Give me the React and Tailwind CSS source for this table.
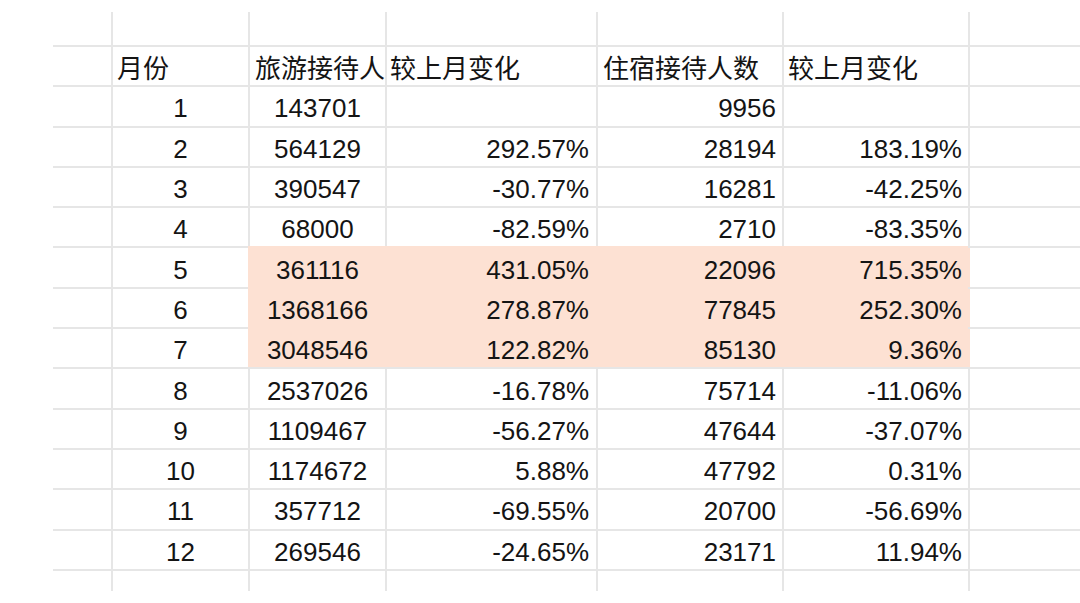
import React from "react";

const rows = [
  ["1", "143701", "", "9956", ""],
  ["2", "564129", "292.57%", "28194", "183.19%"],
  ["3", "390547", "-30.77%", "16281", "-42.25%"],
  ["4", "68000", "-82.59%", "2710", "-83.35%"],
  ["5", "361116", "431.05%", "22096", "715.35%"],
  ["6", "1368166", "278.87%", "77845", "252.30%"],
  ["7", "3048546", "122.82%", "85130", "9.36%"],
  ["8", "2537026", "-16.78%", "75714", "-11.06%"],
  ["9", "1109467", "-56.27%", "47644", "-37.07%"],
  ["10", "1174672", "5.88%", "47792", "0.31%"],
  ["11", "357712", "-69.55%", "20700", "-56.69%"],
  ["12", "269546", "-24.65%", "23171", "11.94%"],
];

const font = { fontFamily: '"Liberation Sans", "Noto Sans CJK SC", sans-serif' };

function Spacer({ h }) {
  return (
    <div className={`flex ${h}`}>
      <div className="w-[58px]" />
      <div className="w-[137px] border-l-2 border-[#e6e6e6]" />
      <div className="w-[137px] border-l-2 border-[#e6e6e6]" />
      <div className="w-[211px] border-l-2 border-[#e6e6e6]" />
      <div className="w-[186px] border-l-2 border-[#e6e6e6]" />
      <div className="w-[186px] border-l-2 border-[#e6e6e6]" />
      <div className="w-[47px] border-l-2 border-[#e6e6e6]" />
    </div>
  );
}

export default function App() {
  return (
    <div className="w-[1080px] h-[603px] bg-white overflow-hidden text-[#141414] text-[26px] leading-none" style={font}>
      <div className="pt-[12px] pl-[53px] flex flex-col">
        <Spacer h="h-[33px]" />
        {/* header */}
        <div className="flex h-[40.3px] border-t-2 border-[#e6e6e6]">
          <div className="w-[58px]" />
          <div className="w-[137px] border-l-2 border-[#e6e6e6] flex items-center pl-[4px] pt-[6px] whitespace-nowrap">月份</div>
          <div className="w-[137px] border-l-2 border-[#e6e6e6] flex items-center pl-[5px] pt-[6px] whitespace-nowrap">旅游接待人</div>
          <div className="w-[211px] border-l-2 border-[#e6e6e6] flex items-center pl-[3px] pt-[6px] whitespace-nowrap">较上月变化</div>
          <div className="w-[186px] border-l-2 border-[#e6e6e6] flex items-center pl-[5px] pt-[6px] whitespace-nowrap">住宿接待人数</div>
          <div className="w-[186px] border-l-2 border-[#e6e6e6] flex items-center pl-[4px] pt-[6px] whitespace-nowrap">较上月变化</div>
          <div className="w-[47px] border-l-2 border-[#e6e6e6]" />
        </div>
        {rows.map((r) => {
          const hl = r[0] === "5" || r[0] === "6" || r[0] === "7";
          const cellB = hl
            ? "bg-[#fde1d3] border-l-2 border-[#fde1d3] -mt-[2px] pt-[6px]"
            : "border-l-2 border-[#e6e6e6] pt-[4px]";
          return (
            <div key={r[0]} className="flex h-[40.3px] border-t-2 border-[#e6e6e6]">
              <div className="w-[58px]" />
              <div className="w-[137px] border-l-2 border-[#e6e6e6] pt-[4px] flex items-center justify-center">{r[0]}</div>
              <div className={`w-[137px] ${cellB} flex items-center justify-center`}>{r[1]}</div>
              <div className={`w-[211px] ${cellB} flex items-center justify-end pr-[7px]`}>{r[2]}</div>
              <div className={`w-[186px] ${cellB} flex items-center justify-end pr-[6px]`}>{r[3]}</div>
              <div className={`w-[186px] ${cellB} flex items-center justify-end pr-[6px]`}>{r[4]}</div>
              <div className={`w-[47px] border-l-2 ${hl ? "border-[#fde1d3]" : "border-[#e6e6e6]"}`} />
            </div>
          );
        })}
        <div className="border-t-2 border-[#e6e6e6]">
          <Spacer h="h-[20px]" />
        </div>
      </div>
    </div>
  );
}
